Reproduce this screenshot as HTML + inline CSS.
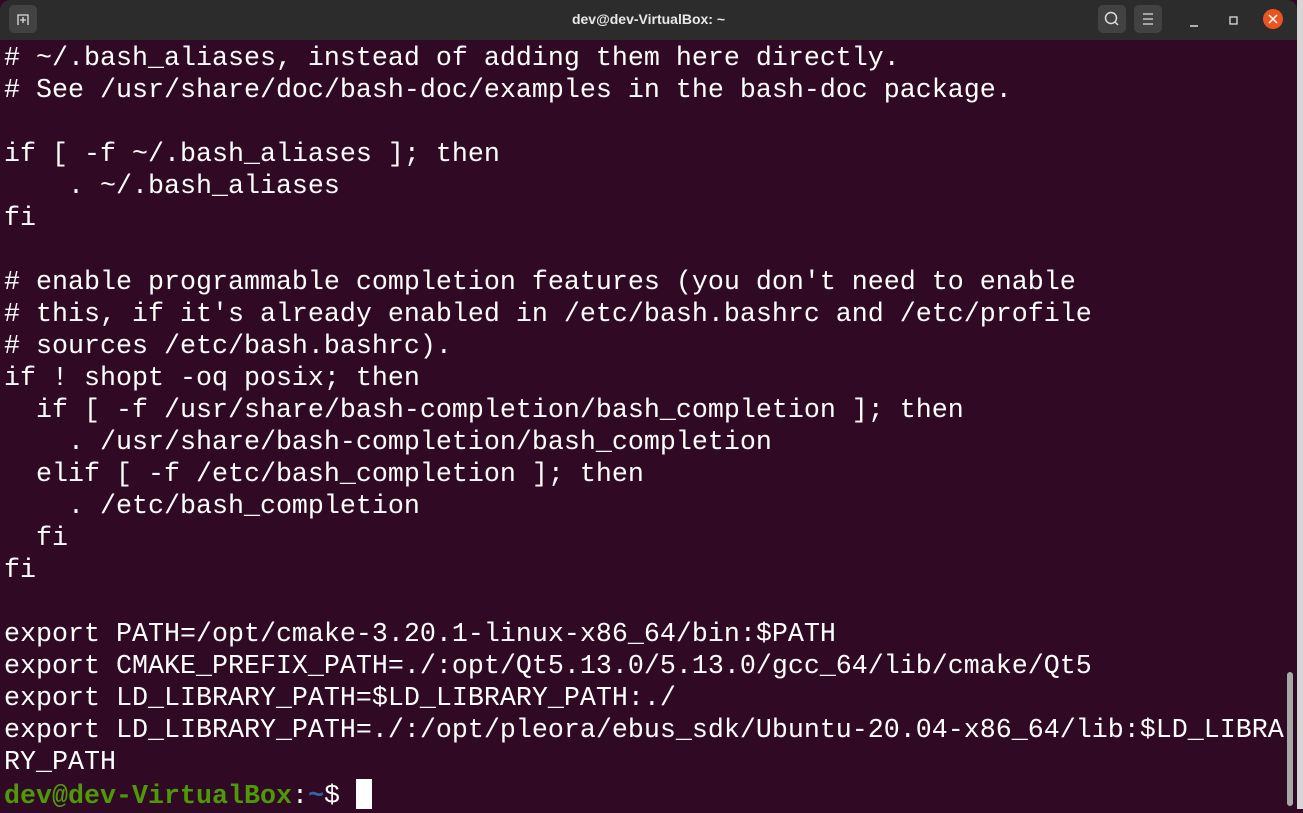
<!DOCTYPE html>
<html><head><style>
html,body{margin:0;padding:0;width:1303px;height:809px;overflow:hidden;background:#300a24}
.tb{position:absolute;left:0;top:0;width:1297px;height:40px;background:#2c2c2c;border-radius:10px 10px 0 0}
.title{position:absolute;left:0;width:1297px;top:0;text-align:center;color:#e8e8e8;font:bold 14px "Liberation Sans",sans-serif;line-height:38px}
.btn{position:absolute;top:5px;width:28px;height:28px;background:#424242;border-radius:5px}
pre{position:absolute;left:4px;top:43px;margin:0;font:26.67px "Liberation Mono",monospace;line-height:32px;color:#fff;white-space:pre}
.g{color:#4e9a06;font-weight:bold}.b{color:#3465a4;font-weight:bold}
.cur{display:inline-block;width:16px;height:30px;background:#fff;vertical-align:-6px}
</style></head><body>
<div class="tb">
<div class="btn" style="left:9px"><svg width="28" height="28"><path d="M9 20V10h10v10" fill="none" stroke="#ddd" stroke-width="1.3"/><path d="M14 12v6M11 15h6" stroke="#ddd" stroke-width="1.3"/></svg></div>
<div class="title">dev@dev-VirtualBox: ~</div>
<div class="btn" style="left:1098px"><svg width="28" height="28"><circle cx="13" cy="13" r="5.5" fill="none" stroke="#ddd" stroke-width="1.5"/><path d="M17 17l3 3" stroke="#ddd" stroke-width="1.5"/></svg></div>
<div class="btn" style="left:1134px"><svg width="28" height="28"><path d="M9 9h10M9 14h10M9 19h10" stroke="#ddd" stroke-width="1.3"/></svg></div>
<svg style="position:absolute;left:1180px;top:5px" width="110" height="30"><path d="M10 21h8" stroke="#ddd" stroke-width="1.5"/><rect x="50" y="12" width="7" height="7" fill="none" stroke="#ddd" stroke-width="1.3"/><circle cx="93" cy="14" r="10" fill="#e95420"/><path d="M89 10l8 8M97 10l-8 8" stroke="#fff" stroke-width="1.5"/></svg>
</div>
<pre># ~/.bash_aliases, instead of adding them here directly.
# See /usr/share/doc/bash-doc/examples in the bash-doc package.

if [ -f ~/.bash_aliases ]; then
    . ~/.bash_aliases
fi

# enable programmable completion features (you don't need to enable
# this, if it's already enabled in /etc/bash.bashrc and /etc/profile
# sources /etc/bash.bashrc).
if ! shopt -oq posix; then
  if [ -f /usr/share/bash-completion/bash_completion ]; then
    . /usr/share/bash-completion/bash_completion
  elif [ -f /etc/bash_completion ]; then
    . /etc/bash_completion
  fi
fi

export PATH=/opt/cmake-3.20.1-linux-x86_64/bin:$PATH
export CMAKE_PREFIX_PATH=./:opt/Qt5.13.0/5.13.0/gcc_64/lib/cmake/Qt5
export LD_LIBRARY_PATH=$LD_LIBRARY_PATH:./
export LD_LIBRARY_PATH=./:/opt/pleora/ebus_sdk/Ubuntu-20.04-x86_64/lib:$LD_LIBRA
RY_PATH
<span class="g">dev@dev-VirtualBox</span>:<span class="b">~</span>$ <span class="cur"></span></pre>
<div style="position:absolute;left:1287px;top:672px;width:6px;height:134px;background:#a8a8a8;border-radius:3px"></div>
<div style="position:absolute;left:1297px;top:0;width:6px;height:809px;background:#d6d6d6"></div>
</body></html>
